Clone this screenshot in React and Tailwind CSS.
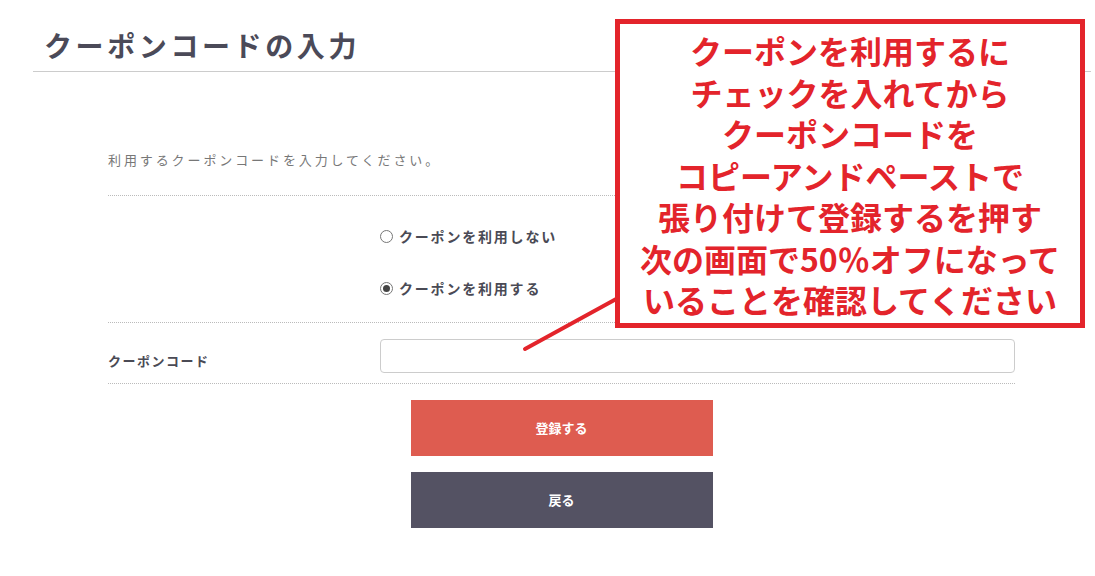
import React from "react";

const jp = "font-['Noto_Sans_CJK_JP','Noto_Sans',sans-serif]";

function Radio({ checked, label }) {
  return (
    <label className="flex items-center gap-[6px] h-[20px] leading-[20px]">
      <span className="w-[13px] h-[13px] rounded-full border border-[#777] bg-white flex items-center justify-center">
        {checked && <span className="w-[7px] h-[7px] rounded-full bg-[#444]" />}
      </span>
      <span className="text-[14px] font-bold tracking-[1.8px] text-[#4a4a55]">{label}</span>
    </label>
  );
}

export default function App() {
  return (
    <div className={`relative w-[1095px] h-[576px] bg-white overflow-hidden ${jp}`}>
      <div className="pl-[33px] pr-[4px]">
        <h1 className="pt-[26px] pb-[7px] pl-[11px] text-[28px] leading-[38px] font-bold tracking-[3.6px] text-[#4b4a58] border-b border-[#cccccc]">
          クーポンコードの入力
        </h1>
      </div>

      <div className="ml-[108px] w-[907px]">
        <p className="mt-[78px] pb-[25px] text-[13px] leading-[20px] tracking-[2.9px] text-[#777] border-b border-dotted border-[#bbb]">
          利用するクーポンコードを入力してください。
        </p>

        <div className="flex pt-[30px] pb-[24px] border-b border-dotted border-[#bbb]">
          <div className="w-[272px]" />
          <div className="flex flex-col gap-[32px]">
            <Radio label="クーポンを利用しない" />
            <Radio checked label="クーポンを利用する" />
          </div>
        </div>

        <div className="flex pt-[16px] pb-[10px] border-b border-dotted border-[#bbb]">
          <div className="w-[272px] mt-[12px] text-[13px] leading-[20px] font-bold tracking-[1.5px] text-[#4a4a55]">
            クーポンコード
          </div>
          <div className="w-[635px] h-[34px] rounded-[4px] border border-[#cccccc] bg-white" />
        </div>

        <div className="flex flex-col items-center gap-[16px] mt-[16px]">
          <button className="w-[302px] h-[56px] bg-[#de5c50] text-white text-[13px] font-bold">
            登録する
          </button>
          <button className="w-[302px] h-[56px] bg-[#545263] text-white text-[13px] font-bold">
            戻る
          </button>
        </div>
      </div>

      <svg className="absolute left-0 top-0" width="1095" height="576" viewBox="0 0 1095 576">
        <line x1="525" y1="349" x2="618" y2="298" stroke="#e3242b" strokeWidth="4" strokeLinecap="round" />
      </svg>

      <div className="absolute left-[615px] top-[19px] w-[470px] h-[309px] border-[5px] border-[#e3242b] bg-white flex flex-col items-center pt-[6px]">
        {[
          "クーポンを利用するに",
          "チェックを入れてから",
          "クーポンコードを",
          "コピーアンドペーストで",
          "張り付けて登録するを押す",
          "次の画面で50％オフになって",
          "いることを確認してください",
        ].map((t) => (
          <div key={t} className="text-[32px] leading-[41.5px] font-bold text-[#e3242b] whitespace-nowrap">
            {t}
          </div>
        ))}
      </div>
    </div>
  );
}
